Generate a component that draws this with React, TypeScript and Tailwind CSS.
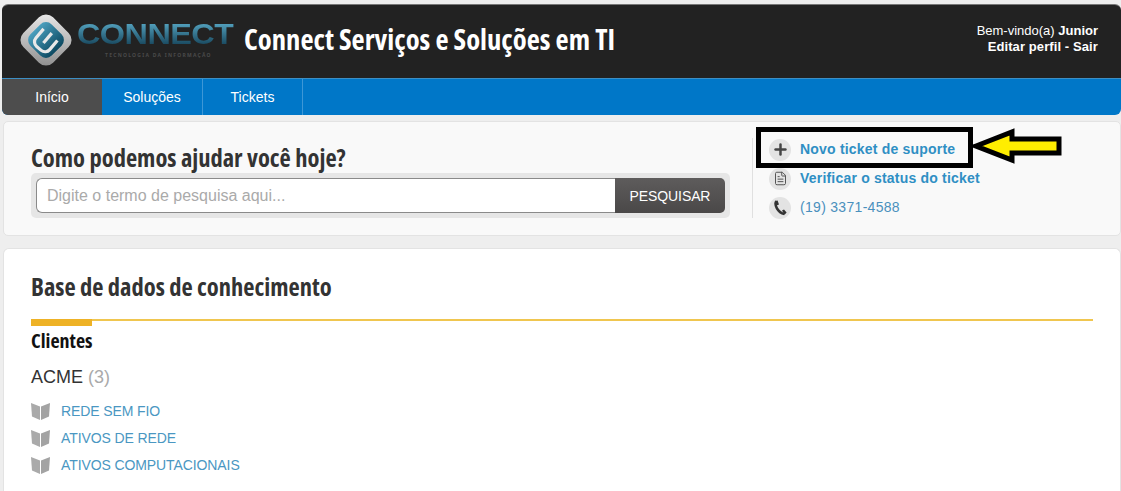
import { FileText, Plus } from "lucide-react";

const sans = "font-['Liberation_Sans',Arial,sans-serif]";
const heading = "font-['Open_Sans',sans-serif] font-bold [font-stretch:75%]";

const articles = ["REDE SEM FIO", "ATIVOS DE REDE", "ATIVOS COMPUTACIONAIS"];

function Logo() {
  return (
    <div className="flex h-[58px] w-[218px] items-start">
      <svg width="52" height="52" viewBox="0 0 52 52" className="-mt-[4px] shrink-0">
        <defs>
          <linearGradient id="shell" x1="0" y1="0" x2="1" y2="1">
            <stop offset="0" stopColor="#ededed" />
            <stop offset="1" stopColor="#8a8a8a" />
          </linearGradient>
          <linearGradient id="core" x1="0" y1="0" x2="1" y2="0">
            <stop offset="0" stopColor="#4a9fbe" />
            <stop offset="1" stopColor="#0d4a62" />
          </linearGradient>
        </defs>
        <rect x="5" y="5" width="42" height="42" rx="10" transform="rotate(45 26 26)" fill="url(#shell)" />
        <rect x="11" y="11" width="30" height="30" rx="8" transform="rotate(45 26 26)" fill="url(#core)" />
        <g transform="rotate(40 26 26)" fill="none" stroke="#e8e8e8" strokeWidth="3.2">
          <path d="M17 19v12a6 6 0 0 0 6 6h6a6 6 0 0 0 6-6v-12" />
          <path d="M26 17v13" />
        </g>
      </svg>
      <div className="ml-[5px] flex flex-col">
        <span className="mt-[1px] origin-left scale-x-[1.08] bg-gradient-to-b from-[#5fb4d2] to-[#0f3a4f] bg-clip-text font-['Liberation_Sans',sans-serif] text-[30px] leading-[30px] font-bold tracking-[-0.5px] text-transparent">
          CONNECT
        </span>
        <span className="mt-[3px] ml-[28px] text-[5px] leading-[7px] font-bold tracking-[1.25px] whitespace-nowrap text-[#4a4a4a]">
          TECNOLOGIA DA INFORMAÇÃO
        </span>
      </div>
    </div>
  );
}

function Header() {
  return (
    <header className="mt-[4px] ml-[2px] overflow-hidden rounded-[6px] border-t border-[#777]">
      <div className="flex h-[73px] items-start bg-[#222222] pt-[13px] pr-[23px] pl-[18px]">
        <Logo />
        <h1 className={`${heading} mt-[1px] ml-[6px] text-[28.6px] leading-[40px] text-white`}>
          Connect Serviços e Soluções em TI
        </h1>
        <div className={`${sans} mt-[5px] ml-auto text-right text-[13px] leading-[16px] text-white`}>
          <p>
            Bem-vindo(a) <b>Junior</b>
          </p>
          <p className="font-bold tracking-[0.1px]">Editar perfil - Sair</p>
        </div>
      </div>
      <nav className={`${sans} flex h-[37px] border-t border-[#3d8fc4] bg-[#0077c8] text-[14px] text-white`}>
        <a className="flex w-[100px] items-center justify-center bg-[#4d4d4d]">Início</a>
        <a className="flex w-[101px] items-center justify-center border-r border-[#3d97d6]">Soluções</a>
        <a className="flex w-[100px] items-center justify-center border-r border-[#3d97d6]">Tickets</a>
      </nav>
    </header>
  );
}

function PhoneGlyph() {
  return (
    <svg width="14" height="16" viewBox="0 0 14 16">
      <path d="M3.4 1.2 C1 4.5 4.5 12.5 11.5 14" fill="none" stroke="#333" strokeWidth="2.6" />
      <path d="M1.8 1 L4.6 0.4 L6 4.4 L3.4 5.6 Z M9 10.4 L11 9.4 L13.6 12.4 L11.6 14.8 Z" fill="#333" />
    </svg>
  );
}

function SearchCard() {
  return (
    <section className="relative mt-[6px] ml-[3px] flex h-[115px] rounded-[5px] border border-[#e3e3e3] bg-[#f9f9f9] pl-[27px]">
      <div className="w-[721px] pt-[21px]">
        <h2 className={`${heading} text-[24.5px] leading-[30px] text-[#333]`}>Como podemos ajudar você hoje?</h2>
        <div className="flex h-[45px] w-[699px] rounded-[5px] bg-[#e6e6e6] p-[5px]">
          <div className={`${sans} flex flex-1 items-center rounded-l-[6px] border border-r-0 border-[#8a8a8a] bg-white pt-[1px] pl-[10px] text-[16px] text-[#aaa]`}>
            Digite o termo de pesquisa aqui...
          </div>
          <button className={`${sans} w-[110px] rounded-r-[5px] bg-gradient-to-b from-[#5e5c5c] to-[#4a4848] pt-[1px] text-[14px] tracking-[-0.1px] text-white`}>
            PESQUISAR
          </button>
        </div>
      </div>
      <div className="mt-[16px] h-[80px] border-l border-[#e0e0e0] pl-[16px]">
        <div className={`${sans} -mt-[3px] flex flex-col text-[14px] leading-[15px] text-[#2f8fc4]`}>
          <a className="flex h-[29px] shrink-0 items-center gap-[9px] font-bold tracking-[0.2px]">
            <span className="flex h-[22px] w-[22px] items-center justify-center rounded-full bg-[#e3e3e3]">
              <Plus size={17} strokeWidth={3.5} className="text-[#444]" />
            </span>
            Novo ticket de suporte
          </a>
          <a className="flex h-[29px] shrink-0 items-center gap-[9px] font-bold tracking-[0.2px]">
            <span className="flex h-[22px] w-[22px] items-center justify-center rounded-full bg-[#e3e3e3]">
              <FileText size={15} strokeWidth={1.6} className="text-[#555]" />
            </span>
            Verificar o status do ticket
          </a>
          <a className="flex h-[29px] shrink-0 items-center gap-[9px] tracking-[0.3px] text-[#4a90bd]">
            <span className="flex h-[22px] w-[22px] items-center justify-center rounded-full bg-[#e3e3e3]">
              <PhoneGlyph />
            </span>
            (19) 3371-4588
          </a>
        </div>
      </div>
      {/* annotation drawn on top of the screenshot */}
      <div className="absolute top-[5px] left-[752px] h-[41px] w-[217px] border-[5px] border-black" />
      <svg width="92" height="40" viewBox="0 0 92 40" className="absolute top-[5px] left-[968px]">
        <path d="M4 19 L40 5 V12 H87 V26 H40 V33 Z" fill="#ffee00" stroke="#000" strokeWidth="5" strokeLinejoin="miter" />
      </svg>
    </section>
  );
}

function BookGlyph() {
  return (
    <svg width="19" height="18" viewBox="0 0 19 18" className="-mt-[2px] shrink-0">
      <path d="M0 1 L9 4.5 V18 L1 14.5 Z" fill="#aaa" />
      <path d="M19 1 L10 4.5 V18 L18 14.5 Z" fill="#a3a3a3" />
    </svg>
  );
}

function KnowledgeBase() {
  return (
    <section className="mt-[12px] ml-[3px] h-[243px] rounded-t-[6px] border border-b-0 border-[#e3e3e3] bg-white px-[27px] pt-[21px]">
      <h2 className={`${heading} text-[24.5px] leading-[34px] text-[#333]`}>Base de dados de conhecimento</h2>
      <div className="mt-[15px] h-[7px] border-t-2 border-[#f0c64f]">
        <div className="-mt-[2px] h-[7px] w-[61px] bg-[#eeb226]" />
      </div>
      <h3 className={`${heading} mt-[1px] text-[20px] leading-[28px] text-[#111]`}>Clientes</h3>
      <p className={`${sans} mt-[10px] text-[18px] leading-[24px] text-[#333]`}>
        ACME <span className="text-[#aaa]">(3)</span>
      </p>
      <ul className={`${sans} mt-[9px] text-[14px] tracking-[-0.1px] text-[#4a97c2]`}>
        {articles.map((name) => (
          <li key={name} className="flex h-[27px] items-center gap-[11px]">
            <BookGlyph />
            {name}
          </li>
        ))}
      </ul>
    </section>
  );
}

export default function App() {
  return (
    <div className="h-[491px] w-[1121px] overflow-hidden bg-[#eeeeee]">
      <Header />
      <SearchCard />
      <KnowledgeBase />
    </div>
  );
}
